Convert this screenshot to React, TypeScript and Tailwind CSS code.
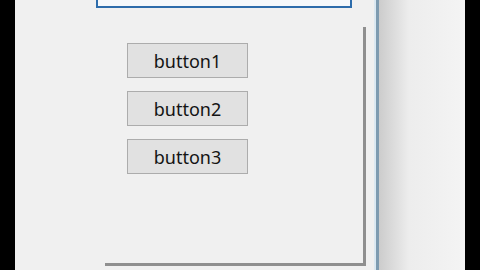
export default function App() {
  const buttons = ['button1', 'button2', 'button3']

  return (
    <div className="flex h-[270px] w-[480px] overflow-hidden bg-black" style={{ fontFamily: '"Noto Sans", "Open Sans", sans-serif' }}>
      <div className="w-[15px] shrink-0 bg-black" />
      <div className="flex w-[450px] shrink-0 bg-[#f0f0f0]">
        <div className="w-[359px] shrink-0">
          <div className="ml-[81px] h-[8px] w-[256px] border-x-2 border-b-2 border-[#2d6cab] bg-[#f5f8fb]" />
          <div className="ml-[87px] mt-[16px] h-[239px] w-[261px] bg-[#f0f0f0] pl-[25px] pt-[19px] shadow-[3px_3px_0_#8f8f8f]">
            <div className="flex flex-col gap-[13px]">
              {buttons.map(label => (
                <div
                  key={label}
                  className="flex h-[35px] w-[121px] items-center justify-center border border-[#acacac] bg-[#e1e1e1] text-[18px] leading-none text-[#141414]"
                >
                  {label}
                </div>
              ))}
            </div>
          </div>
        </div>
        <div className="w-[2px] shrink-0 bg-[#dbe8f1]" />
        <div className="w-[3px] shrink-0 bg-[#7e9bb0]" />
        <div className="flex-1 bg-gradient-to-r from-[#cccccc] via-[#ededed] via-35% to-[#f4f4f4]" />
      </div>
      <div className="w-[15px] shrink-0 bg-black" />
    </div>
  )
}
